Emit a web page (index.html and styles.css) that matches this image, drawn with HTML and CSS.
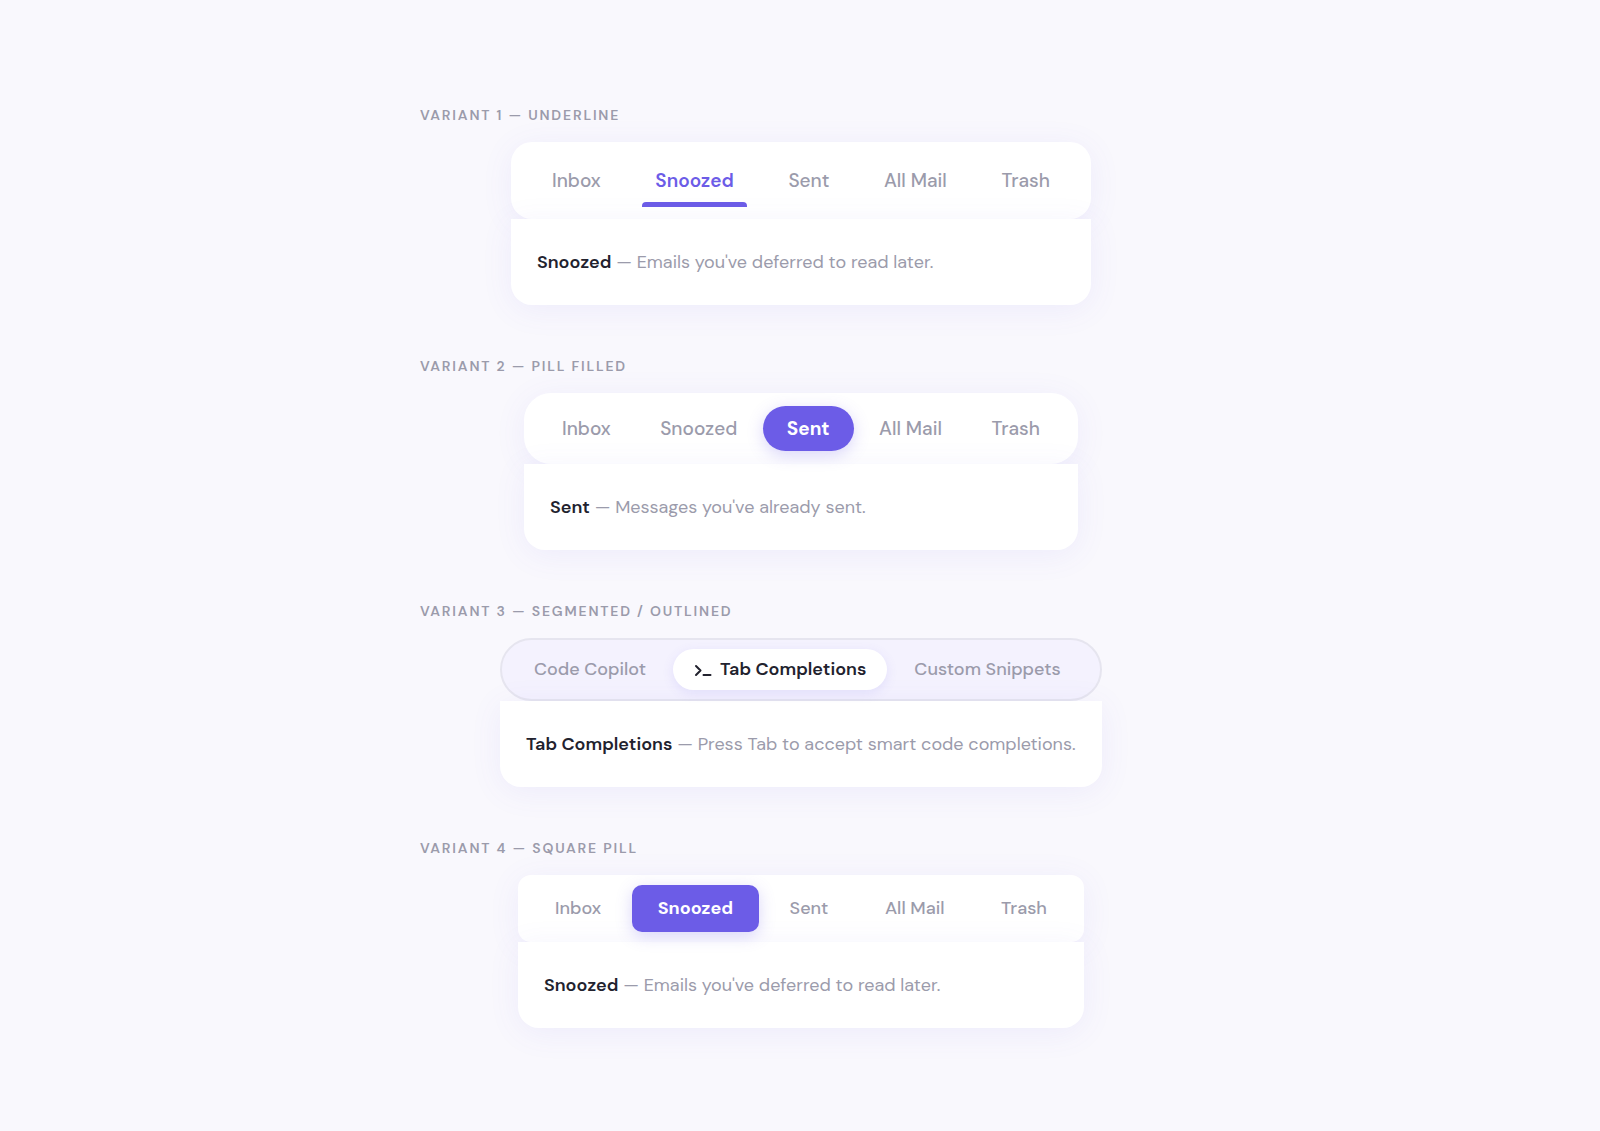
FILE: index.html
```html
<!DOCTYPE html>
<html lang="en">
<head>
    <meta charset="UTF-8">
    <meta name="viewport" content="width=device-width, initial-scale=1.0">
    <title>Tab Variants</title>
    <link rel="stylesheet" href="styles.css">
</head>
<body>

<main class="page">

    <section class="variant">
        <h2 class="variant-label">Variant 1 — Underline</h2>
        <div class="tab-group group-underline">
            <div class="tabs tabs-underline" role="tablist" aria-label="Mail folders">
                <button type="button" class="tab" role="tab">Inbox</button>
                <button type="button" class="tab active" role="tab" aria-selected="true">Snoozed</button>
                <button type="button" class="tab" role="tab">Sent</button>
                <button type="button" class="tab" role="tab">All Mail</button>
                <button type="button" class="tab" role="tab">Trash</button>
            </div>
            <div class="panel" role="tabpanel"><strong>Snoozed</strong> — Emails you've deferred to read later.</div>
        </div>
    </section>

    <section class="variant">
        <h2 class="variant-label">Variant 2 — Pill Filled</h2>
        <div class="tab-group group-pill">
            <div class="tabs tabs-pill" role="tablist" aria-label="Mail folders">
                <button type="button" class="tab" role="tab">Inbox</button>
                <button type="button" class="tab" role="tab">Snoozed</button>
                <button type="button" class="tab active" role="tab" aria-selected="true">Sent</button>
                <button type="button" class="tab" role="tab">All Mail</button>
                <button type="button" class="tab" role="tab">Trash</button>
            </div>
            <div class="panel" role="tabpanel"><strong>Sent</strong> — Messages you've already sent.</div>
        </div>
    </section>

    <section class="variant">
        <h2 class="variant-label">Variant 3 — Segmented / Outlined</h2>
        <div class="tab-group group-segmented">
            <div class="tabs tabs-segmented" role="tablist" aria-label="Editor features">
                <button type="button" class="tab" role="tab">Code Copilot</button>
                <button type="button" class="tab active" role="tab" aria-selected="true">
                    <svg class="tab-icon" viewBox="0 0 18 18" aria-hidden="true">
                        <path d="M2 5l4.500 4.500L2 14M9.500 14h7"/>
                    </svg>
                    Tab Completions
                </button>
                <button type="button" class="tab" role="tab">Custom Snippets</button>
            </div>
            <div class="panel" role="tabpanel"><strong>Tab Completions</strong> — Press Tab to accept smart code completions.</div>
        </div>
    </section>

    <section class="variant">
        <h2 class="variant-label">Variant 4 — Square Pill</h2>
        <div class="tab-group group-square">
            <div class="tabs tabs-square" role="tablist" aria-label="Mail folders">
                <button type="button" class="tab" role="tab">Inbox</button>
                <button type="button" class="tab active" role="tab" aria-selected="true">Snoozed</button>
                <button type="button" class="tab" role="tab">Sent</button>
                <button type="button" class="tab" role="tab">All Mail</button>
                <button type="button" class="tab" role="tab">Trash</button>
            </div>
            <div class="panel" role="tabpanel"><strong>Snoozed</strong> — Emails you've deferred to read later.</div>
        </div>
    </section>

</main>

</body>
</html>
```
FILE: styles.css
```css
* {
    box-sizing: border-box;
}
body {
    font-family: "DM Sans", Inter, sans-serif;
    margin: 0;
    background-color: #f9f8fd;
    color: #9b9bab;
}
.page {
    max-width: 804px;
    margin: 0 auto;
    padding: 107px 20px 102px 22px;
    display: flex;
    flex-direction: column;
    gap: 53px;
}
.variant-label {
    margin: 0 0 18px;
    font-size: 14px;
    line-height: 17px;
    font-weight: 600;
    letter-spacing: 0.13em;
    text-transform: uppercase;
}
.tab-group {
    width: 100%;
    margin: 0 auto;
}
.group-underline {
    max-width: 580px;
}
.group-pill {
    max-width: 554px;
}
.group-segmented {
    max-width: 602px;
}
.group-square {
    max-width: 566px;
}

.tabs {
    display: flex;
    justify-content: space-between;
    background: #fff;
    box-shadow: 0 5px 32px rgba(108, 92, 231, 0.08);
}
.tab {
    font-family: inherit;
    font-size: 19px;
    line-height: 25px;
    font-weight: 500;
    color: #9b9bab;
    background: none;
    border: none;
    white-space: nowrap;
    cursor: pointer;
}
.tab.active {
    font-weight: 600;
}

/* underline */
.tabs-underline {
    padding: 12px 14px;
    border-radius: 21px;
}
.tabs-underline .tab {
    position: relative;
    padding: 14px 27px;
}
.tabs-underline .tab.active {
    color: #6c5ce7;
}
.tabs-underline .tab.active::after {
    content: "";
    position: absolute;
    left: 14px;
    right: 14px;
    bottom: 0;
    height: 5px;
    border-radius: 4px 4px 0 0;
    background: #6c5ce7;
}

/* filled pill */
.tabs-pill {
    padding: 13px 14px;
    border-radius: 27px;
}
.tabs-pill .tab {
    padding: 10px 24px;
    border-radius: 24px;
}
.tabs-pill .tab.active,
.tabs-square .tab.active {
    font-weight: 700;
    color: #fff;
    background: #6c5ce7;
    box-shadow: 0 4px 16px rgba(108, 92, 231, 0.25);
}

/* segmented */
.tabs-segmented {
    justify-content: flex-start;
    gap: 6px;
    padding: 9px 11px;
    border: 2px solid #e6e5ef;
    border-radius: 32px;
    background: #f4f2fe;
    box-shadow: none;
}
.tabs-segmented .tab {
    display: flex;
    align-items: center;
    gap: 8px;
    padding: 8px 21px;
    border-radius: 21px;
    font-size: 18px;
}
.tabs-segmented .tab.active {
    color: #22222e;
    background: #fff;
    box-shadow: 0 3px 12px rgba(108, 92, 231, 0.12);
}
.tab-icon {
    width: 18px;
    height: 18px;
    fill: none;
    stroke: currentColor;
    stroke-width: 2;
    stroke-linecap: round;
    stroke-linejoin: round;
}

/* square pill */
.tabs-square {
    padding: 10px 11px;
    border-radius: 13px;
}
.tabs-square .tab {
    padding: 11px 26px;
    border-radius: 10px;
    font-size: 18px;
}

.panel {
    padding: 29px 26px;
    border-radius: 0 0 21px 21px;
    background: #fff;
    box-shadow: 0 5px 32px rgba(108, 92, 231, 0.08);
    font-size: 18px;
    line-height: 28px;
}
.panel strong {
    color: #22222e;
    font-weight: 600;
}
```
